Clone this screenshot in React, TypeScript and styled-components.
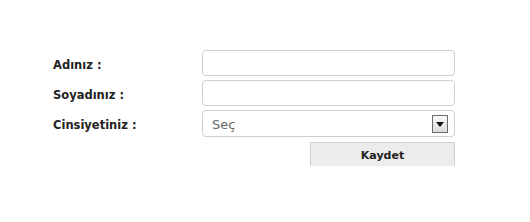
import styled, { createGlobalStyle } from "styled-components";

const GlobalStyle = createGlobalStyle`
  body {
    margin: 0;
    background: #fff;
    font-family: "DejaVu Sans", Verdana, sans-serif;
  }
`;

const Page = styled.div`
  padding: 50px 0 0 53px;
`;

const Form = styled.form`
  display: grid;
  grid-template-columns: 149px 253px;
  grid-auto-rows: 26px;
  row-gap: 4px;
  align-items: center;
`;

const Label = styled.label`
  padding-top: 3px;
  font-size: 11.5px;
  font-weight: bold;
  color: #222;
`;

const Field = styled.input`
  box-sizing: border-box;
  width: 100%;
  height: 26px;
  border: 1px solid #cfcfcf;
  border-radius: 4px;
  background: #fff;
  outline: none;
`;

const SelectBox = styled.div`
  box-sizing: border-box;
  height: 27px;
  margin-top: 1px;
  border: 1px solid #cfcfcf;
  border-radius: 4px;
  display: flex;
  align-items: center;
  justify-content: space-between;
  padding: 1px 6px 0 9px;
  font-size: 13px;
  color: #666;
`;

const Arrow = styled.span`
  box-sizing: border-box;
  width: 16px;
  height: 18px;
  border: 1px solid #6a6a6a;
  background: linear-gradient(#fafafa, #dcdcdc);
  display: flex;
  align-items: center;
  justify-content: center;
`;

const Button = styled.button`
  grid-column: 2;
  justify-self: end;
  box-sizing: border-box;
  width: 145px;
  height: 27px;
  margin-top: 4px;
  padding-top: 2px;
  border: 1px solid #cfcfcf;
  background: #ececec;
  font-family: "DejaVu Sans", Verdana, sans-serif;
  font-size: 11px;
  font-weight: bold;
  color: #222;
`;

export default function App() {
  return (
    <>
      <GlobalStyle />
      <Page>
        <Form>
          <Label>Adınız :</Label>
          <Field />
          <Label>Soyadınız :</Label>
          <Field />
          <Label>Cinsiyetiniz :</Label>
          <SelectBox>
            <span>Seç</span>
            <Arrow>
              <svg width="8" height="5" viewBox="0 0 8 5">
                <path d="M0 0h8L4 5z" fill="#111" />
              </svg>
            </Arrow>
          </SelectBox>
          <Button type="button">Kaydet</Button>
        </Form>
      </Page>
    </>
  );
}
